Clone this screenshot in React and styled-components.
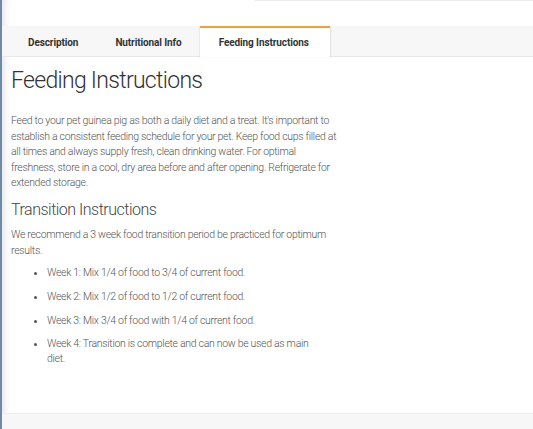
import { useState } from "react";
import styled, { createGlobalStyle } from "styled-components";

const GlobalStyle = createGlobalStyle`
  html, body {
    margin: 0;
    padding: 0;
    background: #fff;
  }
  body {
    font-family: "Roboto Light", Roboto, "Liberation Sans", Arial, sans-serif;
    color: #555;
  }
`;

const Page = styled.div`
  position: relative;
  height: 429px;
  display: flex;
  flex-direction: column;
  border-left: 2px solid #6f8aa8;
  box-shadow: inset 8px 0 8px -6px rgba(0, 0, 0, 0.12);
  overflow: hidden;
`;

const TopStrip = styled.div`
  height: 26px;
  display: flex;
  justify-content: flex-end;
`;

const SearchEdge = styled.div`
  width: 278px;
  height: 1px;
  background: #ececec;
`;

const TabBar = styled.div`
  display: flex;
  height: 30px;
  padding-left: 7px;
  background: #f7f7f7;
  border-bottom: 1px solid #e8e8e8;
`;

const Tab = styled.button`
  border: none;
  border-top: 2px solid ${(p) => (p.$active ? "#eea23a" : "transparent")};
  background: ${(p) => (p.$active ? "#fff" : "transparent")};
  padding: ${(p) => (p.$active ? "0 21px 0 19px" : "0 18px 0 19px")};
  margin-bottom: ${(p) => (p.$active ? "-1px" : "0")};
  box-shadow: ${(p) => (p.$active ? "1px 0 1px rgba(0,0,0,0.08), -1px 0 1px rgba(0,0,0,0.05)" : "none")};
  font-family: Roboto, "Liberation Sans", Arial, sans-serif;
  font-weight: 700;
  font-size: 10px;
  letter-spacing: -0.1px;
  color: #333;
  cursor: pointer;
  height: ${(p) => (p.$active ? "31px" : "30px")};
`;

const Content = styled.div`
  flex: 1;
  padding: 10px 9px 0;
  width: 330px;
`;

const Title = styled.h1`
  margin: 0 0 18px;
  font-weight: 300;
  font-size: 23px;
  letter-spacing: -0.7px;
  line-height: 28px;
  color: #333;
`;

const Text = styled.p`
  margin: 0 0 ${(p) => p.$gap || 10}px;
  font-weight: 300;
  font-size: 10.5px;
  letter-spacing: -0.3px;
  line-height: 15.6px;
  color: #555;
`;

const SubTitle = styled.h2`
  margin: 0 0 8px;
  font-weight: 300;
  font-size: 16px;
  letter-spacing: -0.5px;
  line-height: 18px;
  color: #444;
`;

const List = styled.ul`
  margin: 0;
  padding-left: 36px;
  list-style: disc;
`;

const Item = styled.li`
  font-weight: 300;
  font-size: 10.5px;
  letter-spacing: -0.3px;
  line-height: 15.2px;
  color: #555;
  margin-bottom: 8.5px;
  padding-right: 24px;
`;

const Footer = styled.div`
  height: 15px;
  background: #f7f7f7;
  border-top: 1px solid #efefef;
`;

const tabs = ["Description", "Nutritional Info", "Feeding Instructions"];

const weeks = [
  "Week 1: Mix 1/4 of food to 3/4 of current food.",
  "Week 2: Mix 1/2 of food to 1/2 of current food.",
  "Week 3: Mix 3/4 of food with 1/4 of current food.",
  "Week 4: Transition is complete and can now be used as main diet.",
];

export default function App() {
  const [active, setActive] = useState("Feeding Instructions");

  return (
    <>
      <GlobalStyle />
      <Page>
        <TopStrip>
          <SearchEdge />
        </TopStrip>
        <TabBar>
          {tabs.map((t) => (
            <Tab key={t} $active={active === t} onClick={() => setActive(t)}>
              {t}
            </Tab>
          ))}
        </TabBar>
        <Content>
          <Title>Feeding Instructions</Title>
          <Text>
            Feed to your pet guinea pig as both a daily diet and a treat. It's important to
            establish a consistent feeding schedule for your pet. Keep food cups filled at
            all times and always supply fresh, clean drinking water. For optimal
            freshness, store in a cool, dry area before and after opening. Refrigerate for
            extended storage.
          </Text>
          <SubTitle>Transition Instructions</SubTitle>
          <Text $gap={7}>
            We recommend a 3 week food transition period be practiced for optimum results.
          </Text>
          <List>
            {weeks.map((w) => (
              <Item key={w}>{w}</Item>
            ))}
          </List>
        </Content>
        <Footer />
      </Page>
    </>
  );
}
